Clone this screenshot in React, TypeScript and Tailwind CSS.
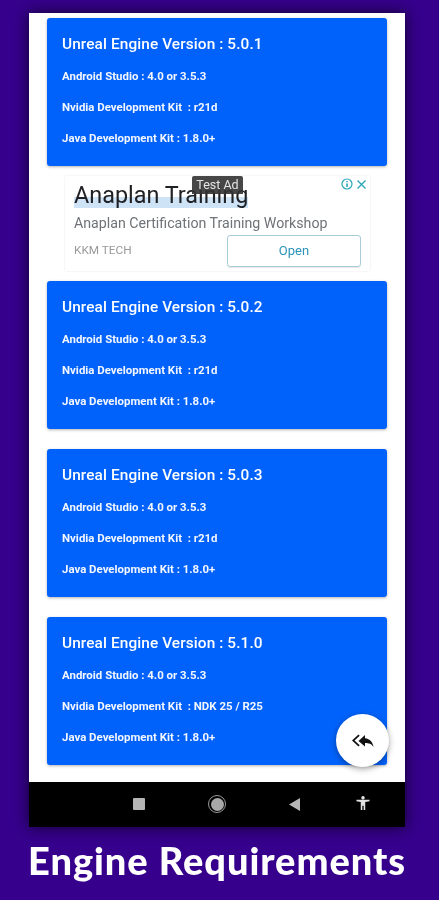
const cards = [
  { v: "5.0.1", ndk: "r21d" },
  { v: "5.0.2", ndk: "r21d" },
  { v: "5.0.3", ndk: "r21d" },
  { v: "5.1.0", ndk: "NDK 25 / R25" },
];

function Card({ v, ndk }: { v: string; ndk: string }) {
  return (
    <div className="h-[148px] mx-[18px] rounded-[3px] bg-[#0062fb] px-[15px] pt-[16px] text-white shadow-[0_1px_3px_rgba(0,0,0,0.3)] font-['Roboto',sans-serif]">
      <div className="text-[15.4px] leading-[20px] font-medium tracking-[0.1px]">Unreal Engine Version : {v}</div>
      <div className="mt-[14px] flex flex-col gap-[15px] text-[11.45px] leading-[16px] font-bold text-[#f2f6ff]">
        <div>Android Studio : 4.0 or 3.5.3</div>
        <div className="whitespace-pre">Nvidia Development Kit  : {ndk}</div>
        <div>Java Development Kit : 1.8.0+</div>
      </div>
    </div>
  );
}

function Ad() {
  return (
    <div className="relative mx-[36px] my-[10px] h-[95px] w-[305px] bg-white shadow-[0_0_2px_rgba(0,0,0,0.1)] px-[9px] font-['Roboto',sans-serif]">
      <div className="pt-[3px] text-[23.4px] leading-[32px] text-[#202124] bg-[linear-gradient(to_bottom,transparent_60%,#cfe3f7_60%,#cfe3f7_90%,transparent_90%)] w-fit">Anaplan Training</div>
      <div className="mt-[2px] text-[14.2px] leading-[20px] text-[#6f7276]">Anaplan Certification Training Workshop</div>
      <div className="mt-[2px] flex items-center justify-between">
        <span className="text-[11.8px] text-[#9a9a9a]">KKM TECH</span>
        <div className="flex h-[32px] w-[134px] items-center justify-center rounded-[3px] border border-[#a9cdd6] text-[13px] text-[#2b93ba] shadow-[0_1px_1px_rgba(0,0,0,0.1)]">Open</div>
      </div>
      <div className="absolute left-[127px] top-0 flex h-[18px] w-[51px] items-center justify-center rounded-t-[2px] bg-[#333333]/90 text-[12.5px] text-[#e5e5e5]">Test Ad</div>
      <div className="absolute right-[3px] top-[2px] flex items-center gap-[3px] text-[#2ba5b8]">
        <svg width="12" height="12" viewBox="0 0 12 12" fill="none" stroke="currentColor">
          <circle cx="6" cy="6" r="5" strokeWidth="1.2" />
          <path d="M6 3v1.2M6 5.4V9" strokeWidth="1.6" />
        </svg>
        <svg width="11" height="11" viewBox="0 0 11 11" fill="none" stroke="currentColor" strokeWidth="1.3">
          <path d="M1.5 1.5l8 8M9.5 1.5l-8 8" />
        </svg>
      </div>
    </div>
  );
}

export default function App() {
  return (
    <div className="relative h-[900px] w-[439px] overflow-hidden bg-[#36008c] pt-[13px] blur-[0.4px]">
      <div className="mx-[29px] w-[376px] shadow-[0_0_14px_rgba(0,0,0,0.7)]">
        <div className="relative h-[769px] overflow-hidden bg-white pt-[5px]">
          <Card {...cards[0]} />
          <Ad />
          <div className="flex flex-col gap-[20px]">
            <Card {...cards[1]} />
            <Card {...cards[2]} />
            <Card {...cards[3]} />
          </div>
          <button className="absolute left-[307px] top-[701px] flex h-[53px] w-[53px] items-center justify-center rounded-full bg-white shadow-[0_2px_6px_rgba(0,0,0,0.35)]">
            <svg width="24" height="16" viewBox="0 0 24 16" fill="#111">
              <path d="M9.5 1.5L3 7.5l6.5 6 1.2-1.2-5.2-4.8 5.2-4.8z" transform="translate(-2 0)" />
              <path d="M14 2L7.5 8l6.5 5.5V10c4 0 6.5.8 8.5 4-.6-5-3.5-8.3-8.5-8.8z" />
            </svg>
          </button>
        </div>
        <div className="flex h-[45px] items-center bg-black pb-[1px]">
          <div className="ml-[104px] h-[12px] w-[12px] rounded-[1px] bg-[#b5b5b5]" />
          <div className="ml-[63px] flex h-[18px] w-[18px] items-center justify-center rounded-full border border-[#9a9a9a]">
            <div className="h-[13px] w-[13px] rounded-full bg-[#a8a8a8]" />
          </div>
          <svg className="ml-[63px]" width="11" height="13" viewBox="0 0 11 13"><path d="M11 0v13L0 6.5z" fill="#b5b5b5" /></svg>
          <svg className="ml-[56px] mb-[3px]" width="14" height="14" viewBox="0 0 15 15" fill="#e0e0e0">
            <circle cx="7.5" cy="2" r="1.9" />
            <path d="M0.5 4h14v1.6l-4.6.8V15H8.2v-4.5H6.8V15H5.1V6.4L0.5 5.6z" />
          </svg>
        </div>
      </div>
      <div className="mt-[13px] whitespace-nowrap pr-[5px] text-center font-['Lato',sans-serif] text-[38px] leading-[40px] font-black tracking-[0.95px] text-white">Engine Requirements</div>
    </div>
  );
}
